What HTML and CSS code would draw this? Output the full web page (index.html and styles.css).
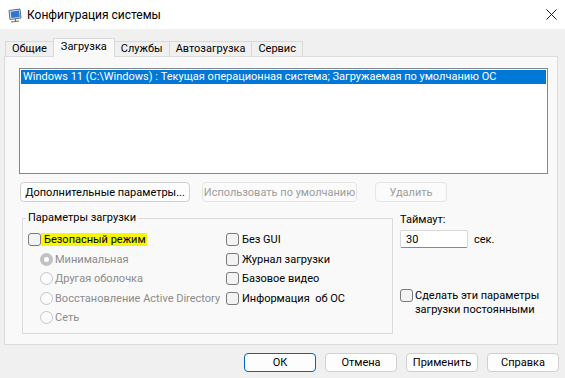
FILE: index.html
```html
<!DOCTYPE html>
<html lang="ru">
<head>
    <meta charset="UTF-8">
    <title>Конфигурация системы</title>
    <link rel="stylesheet" href="styles.css">
</head>
<body>

<div class="titlebar">
    <svg class="app-icon" viewBox="0 0 16 16">
        <path d="M2 3.5 L13 2 L14 11 L3 12.5 Z" fill="#e4e9ef" stroke="#5f6b78"/>
        <path d="M3.6 4.7 L12 3.6 L12.7 9.9 L4.3 11 Z" fill="#2b78d4"/>
        <path d="M4 15 L12 14 M8.3 12 L8.5 14.4" stroke="#5f6b78" stroke-width="1.2"/>
    </svg>
    <span class="title">Конфигурация системы</span>
    <svg class="close" viewBox="0 0 11 11">
        <path d="M0.5 0.5 L10.5 10.5 M10.5 0.5 L0.5 10.5" stroke="#1a1a1a" stroke-width="1"/>
    </svg>
</div>

<div class="tabs">
    <span class="tab">Общие</span>
    <span class="tab active">Загрузка</span>
    <span class="tab">Службы</span>
    <span class="tab">Автозагрузка</span>
    <span class="tab">Сервис</span>
</div>

<div class="panel">
    <div class="os-list">
        <div class="os-item selected">Windows 11 (C:\Windows) : Текущая операционная система; Загружаемая по умолчанию ОС</div>
    </div>

    <div class="actions">
        <button class="btn btn-advanced">Дополнительные параметры...</button>
        <button class="btn btn-default" disabled>Использовать по умолчанию</button>
        <button class="btn btn-delete" disabled>Удалить</button>
    </div>

    <div class="options">
        <fieldset class="boot-box">
            <legend>Параметры загрузки</legend>
            <div class="boot-cols">
                <div class="col-left">
                    <div class="row"><span class="box"></span><span class="marked">Безопасный режим</span></div>
                    <div class="row sub disabled"><span class="radio checked"></span>Минимальная</div>
                    <div class="row sub disabled"><span class="radio"></span>Другая оболочка</div>
                    <div class="row sub disabled"><span class="radio"></span>Восстановление Active Directory</div>
                    <div class="row sub disabled"><span class="radio"></span>Сеть</div>
                </div>
                <div class="col-right">
                    <div class="row"><span class="box"></span>Без GUI</div>
                    <div class="row"><span class="box"></span>Журнал загрузки</div>
                    <div class="row"><span class="box"></span>Базовое видео</div>
                    <div class="row"><span class="box"></span>Информация&nbsp; об ОС</div>
                </div>
            </div>
        </fieldset>

        <div class="side">
            <div class="timeout-label">Таймаут:</div>
            <div class="timeout-row">
                <input class="timeout" type="text" value="30">
                <span class="unit">сек.</span>
            </div>
            <div class="persist">
                <span class="box"></span>
                <span>Сделать эти параметры<br>загрузки постоянными</span>
            </div>
        </div>
    </div>
</div>

<div class="footer">
    <button class="btn btn-dlg btn-ok">ОК</button>
    <button class="btn btn-dlg">Отмена</button>
    <button class="btn btn-dlg">Применить</button>
    <button class="btn btn-dlg">Справка</button>
</div>

</body>
</html>
```

FILE: styles.css
```css
* {
    box-sizing: border-box;
}
body {
    margin: 0;
    width: 565px;
    height: 378px;
    overflow: hidden;
    background-color: #f0f0f0;
    font-family: Roboto, "Segoe UI", sans-serif;
    font-size: 11px;
    color: #000;
}
.titlebar {
    height: 29px;
    background-color: #fff;
    display: flex;
    align-items: center;
    padding: 0 8px 0 7px;
}
.app-icon {
    width: 16px;
    height: 16px;
    margin-right: 4px;
}
.title {
    flex: 1;
    font-size: 12px;
}
.close {
    width: 11px;
    height: 11px;
}
.tabs {
    display: flex;
    align-items: flex-end;
    height: 27px;
    padding-left: 5px;
}
.tab {
    height: 15px;
    line-height: 13px;
    padding: 0 6px;
    border: 1px solid #d9d9d9;
    border-bottom: none;
    margin-right: -1px;
    background-color: #f0f0f0;
}
.tab.active {
    height: 19px;
    line-height: 15px;
    padding: 0 7px;
    margin-bottom: -1px;
    background-color: #f9f9f9;
    position: relative;
    z-index: 1;
}
.panel {
    height: 289px;
    margin: 0 7px 0 4px;
    border: 1px solid #dcdcdc;
    background-color: #f9f9f9;
    padding: 11px 9px 0 14px;
}
.os-list {
    height: 106px;
    border: 1px solid #828790;
    background-color: #fff;
    padding: 1px;
}
.os-item {
    height: 14px;
    line-height: 14px;
    padding-left: 2px;
    white-space: nowrap;
    overflow: hidden;
}
.os-item.selected {
    background-color: #0078d7;
    color: #fff;
}
.btn {
    height: 20px;
    padding: 0;
    border: 1px solid #d0d0d0;
    border-radius: 4px;
    background-color: #fdfdfd;
    font: inherit;
    color: #000;
    white-space: nowrap;
}
.btn:disabled {
    color: #9d9d9d;
    border-color: #e5e5e5;
    background-color: #fbfbfb;
}
.actions {
    display: flex;
    margin-top: 8px;
    padding-left: 1px;
}
.btn-advanced {
    width: 170px;
}
.btn-default {
    width: 155px;
    margin-left: 12px;
}
.btn-delete {
    width: 72px;
    margin-left: 18px;
}
.options {
    display: grid;
    grid-template-columns: 371px 1fr;
    column-gap: 7px;
    margin: 8px 0 0 3px;
}
.boot-box {
    margin: 0;
    height: 124px;
    padding: 4px 0 0 3px;
    border: 1px solid #dcdcdc;
}
.boot-box legend {
    padding: 0 2px;
    line-height: 16px;
}
.boot-cols {
    display: grid;
    grid-template-columns: 200px 1fr;
}
.row {
    height: 19.5px;
    display: flex;
    align-items: center;
    white-space: nowrap;
}
.col-left .row {
    padding-left: 2px;
}
.row.sub {
    padding-left: 14px;
}
.disabled {
    color: #8c8c8c;
}
.box {
    width: 13px;
    height: 13px;
    flex: none;
    border: 1px solid #7a7a7a;
    border-radius: 3px;
    background-color: #f3f3f3;
    margin-right: 3px;
}
.marked {
    background-color: #f7f700;
    margin-left: -3px;
    padding: 0 1px 0 3px;
    line-height: 13px;
}
.radio {
    width: 13px;
    height: 13px;
    flex: none;
    border: 1px solid #c6c6c6;
    border-radius: 50%;
    background-color: #fbfbfb;
    margin-right: 2px;
}
.radio.checked {
    border: 4px solid #c2c2c2;
    background-color: #fff;
}
.side {
    padding-top: 2px;
}
.timeout-label {
    line-height: 16px;
}
.timeout-row {
    display: flex;
    align-items: center;
    margin-top: 2px;
}
.timeout {
    width: 68px;
    height: 18px;
    border: 1px solid #d9d9d9;
    border-bottom-color: #8a8a8a;
    border-radius: 2px;
    background-color: #fff;
    font: inherit;
    padding: 0 5px;
}
.unit {
    margin-left: 6px;
}
.persist {
    display: flex;
    align-items: flex-start;
    margin-top: 41px;
    line-height: 13.5px;
    white-space: nowrap;
}
.persist .box {
    margin-right: 2px;
}
.footer {
    display: flex;
    justify-content: flex-end;
    gap: 9px;
    padding: 8px 6px 0 0;
}
.btn-dlg {
    width: 72px;
    height: 19px;
}
.btn-ok {
    border-color: #0067c0;
}
```
